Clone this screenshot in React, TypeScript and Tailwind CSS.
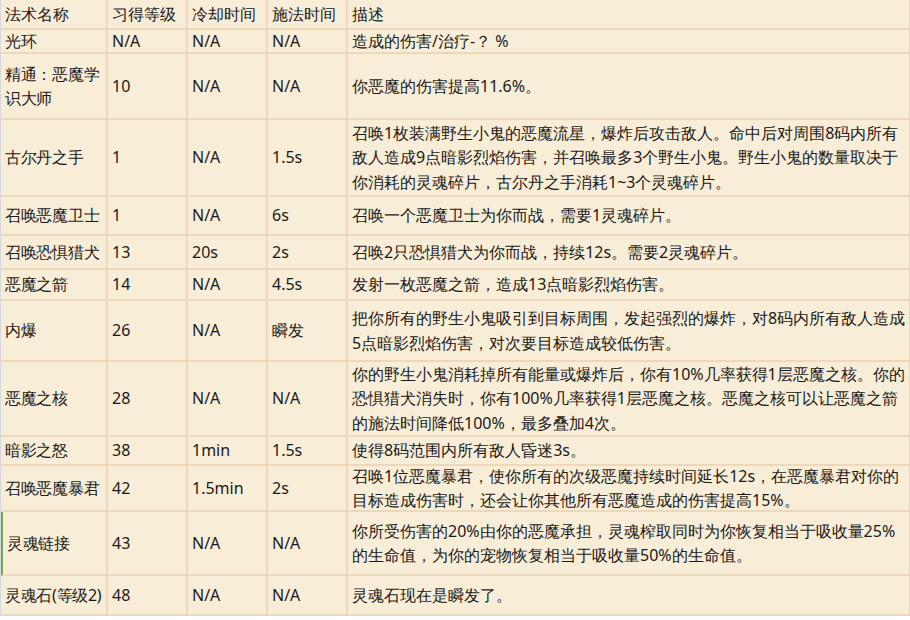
const rows: [string, string, string, string, string, string][] = [
  ["光环", "N/A", "N/A", "N/A", "造成的伤害/治疗-？ %", "h-[24px]"],
  ["精通：恶魔学识大师", "10", "N/A", "N/A", "你恶魔的伤害提高11.6%。", "h-[66px]"],
  ["古尔丹之手", "1", "N/A", "1.5s", "召唤1枚装满野生小鬼的恶魔流星，爆炸后攻击敌人。命中后对周围8码内所有敌人造成9点暗影烈焰伤害，并召唤最多3个野生小鬼。野生小鬼的数量取决于你消耗的灵魂碎片，古尔丹之手消耗1~3个灵魂碎片。", "h-[77px]"],
  ["召唤恶魔卫士", "1", "N/A", "6s", "召唤一个恶魔卫士为你而战，需要1灵魂碎片。", "h-[39px]"],
  ["召唤恐惧猎犬", "13", "20s", "2s", "召唤2只恐惧猎犬为你而战，持续12s。需要2灵魂碎片。", "h-[34px]"],
  ["恶魔之箭", "14", "N/A", "4.5s", "发射一枚恶魔之箭，造成13点暗影烈焰伤害。", "h-[31px]"],
  ["内爆", "26", "N/A", "瞬发", "把你所有的野生小鬼吸引到目标周围，发起强烈的爆炸，对8码内所有敌人造成5点暗影烈焰伤害，对次要目标造成较低伤害。", "h-[61px]"],
  ["恶魔之核", "28", "N/A", "N/A", "你的野生小鬼消耗掉所有能量或爆炸后，你有10%几率获得1层恶魔之核。你的恐惧猎犬消失时，你有100%几率获得1层恶魔之核。恶魔之核可以让恶魔之箭的施法时间降低100%，最多叠加4次。", "h-[75px]"],
  ["暗影之怒", "38", "1min", "1.5s", "使得8码范围内所有敌人昏迷3s。", "h-[29px]"],
  ["召唤恶魔暴君", "42", "1.5min", "2s", "召唤1位恶魔暴君，使你所有的次级恶魔持续时间延长12s，在恶魔暴君对你的目标造成伤害时，还会让你其他所有恶魔造成的伤害提高15%。", "h-[46px]"],
  ["灵魂链接", "43", "N/A", "N/A", "你所受伤害的20%由你的恶魔承担，灵魂榨取同时为你恢复相当于吸收量25%的生命值，为你的宠物恢复相当于吸收量50%的生命值。", "h-[64px]"],
  ["灵魂石(等级2)", "48", "N/A", "N/A", "灵魂石现在是瞬发了。", "h-[40px]"],
];
const cell = "border-r-2 border-b-2 border-[#eed8bc] pl-[4px] flex items-center";
export default function App() {
  return (
    <div className="w-[910px] h-[620px] overflow-hidden bg-white text-[16px] leading-[24.5px] text-[#1a1a1a] font-['Liberation_Sans','Noto_Sans_CJK_SC',sans-serif]">
      <div className="grid grid-cols-[107px_80px_80px_80px_563px] bg-[#f8edd6] border-l border-[#d8d8d8]">
        {["法术名称", "习得等级", "冷却时间", "施法时间", "描述"].map((h) => (
          <div key={h} className={`${cell} h-[30px]`}>{h}</div>
        ))}
        {rows.map((r, i) => [
          <div key={"a" + i} className={`${cell} ${r[5]} ${i === 10 ? "border-l-2 border-l-[#6aa84f]" : ""} tracking-[-0.3px]`}>{r[0]}</div>,
          <div key={"b" + i} className={`${cell} ${r[5]}`}>{r[1]}</div>,
          <div key={"c" + i} className={`${cell} ${r[5]}`}>{r[2]}</div>,
          <div key={"d" + i} className={`${cell} ${r[5]}`}>{r[3]}</div>,
          <div key={"e" + i} className={`${cell} ${r[5]} pr-[2px]`}>{r[4]}</div>,
        ])}
      </div>
    </div>
  );
}
